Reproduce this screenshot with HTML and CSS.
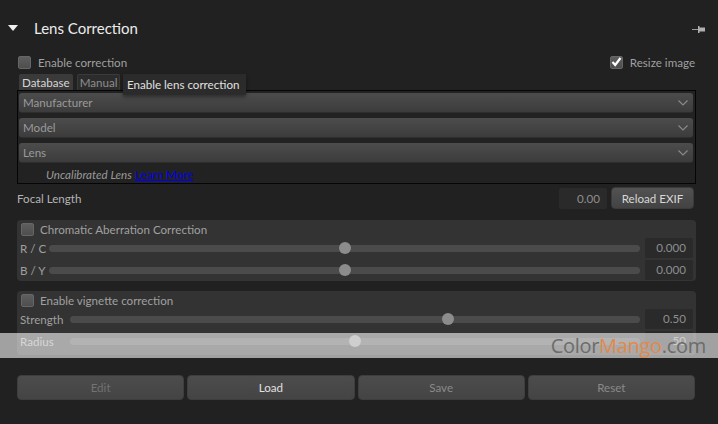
FILE: index.html
```html
<!DOCTYPE html>
<html>
<head>
<meta charset="utf-8">
<link rel="stylesheet" href="styles.css">
</head>
<body>
<div class="app">
  <div class="header">
    <svg class="tri" width="10" height="7" viewBox="0 0 10 7"><polygon points="0,0 10,0 5,6" fill="#f0f0f0"/></svg>
    <span class="title">Lens Correction</span>
    <svg class="pin" width="14" height="7" viewBox="0 0 14 7"><rect x="0" y="3" width="7" height="1" fill="#9a9a9a"/><rect x="6" y="0" width="1.5" height="7" fill="#b0b0b0"/><rect x="7" y="1.5" width="6" height="4" fill="#b0b0b0"/></svg>
  </div>
  <div class="panel">
    <div class="toprow">
      <label class="chk"><span class="box"></span><span>Enable correction</span></label>
      <label class="chk"><span class="box checked"><svg width="11" height="10" viewBox="0 0 11 10"><polyline points="1.5,5 4.2,8 9.5,1" fill="none" stroke="#ffffff" stroke-width="2.2"/></svg></span><span>Resize image</span></label>
    </div>
    <div class="tabs">
      <span class="tab active">Database</span>
      <span class="tab">Manual</span>
    </div>
    <div class="dbbox">
      <div class="combo"><span>Manufacturer</span><svg width="10" height="6" viewBox="0 0 10 6"><polyline points="0.5,0.5 5,5 9.5,0.5" fill="none" stroke="#8a8a8a" stroke-width="1.2"/></svg></div>
      <div class="combo"><span>Model</span><svg width="10" height="6" viewBox="0 0 10 6"><polyline points="0.5,0.5 5,5 9.5,0.5" fill="none" stroke="#8a8a8a" stroke-width="1.2"/></svg></div>
      <div class="combo"><span>Lens</span><svg width="10" height="6" viewBox="0 0 10 6"><polyline points="0.5,0.5 5,5 9.5,0.5" fill="none" stroke="#8a8a8a" stroke-width="1.2"/></svg></div>
      <div class="uncal"><em>Uncalibrated Lens</em> <a href="#">Learn More</a></div>
    </div>
    <div class="focal">
      <span class="flabel">Focal Length</span>
      <span class="num fnum">0.00</span>
      <span class="btn reload">Reload EXIF</span>
    </div>
    <div class="group g1">
      <label class="chk"><span class="box"></span><span>Chromatic Aberration Correction</span></label>
      <div class="srow"><span class="slabel">R / C</span><div class="track"><span class="thumb" style="left:50%"></span></div><span class="num">0.000</span></div>
      <div class="srow"><span class="slabel">B / Y</span><div class="track"><span class="thumb" style="left:50%"></span></div><span class="num">0.000</span></div>
    </div>
    <div class="group g2">
      <label class="chk"><span class="box"></span><span>Enable vignette correction</span></label>
      <div class="srow"><span class="slabel">Strength</span><div class="track"><span class="thumb" style="left:66.3%"></span></div><span class="num">0.50</span></div>
      <div class="srow"><span class="slabel">Radius</span><div class="track"><span class="thumb" style="left:50%"></span></div><span class="num">50</span></div>
    </div>
    <div class="buttons">
      <span class="btn dis">Edit</span>
      <span class="btn on">Load</span>
      <span class="btn mid">Save</span>
      <span class="btn mid">Reset</span>
    </div>
  </div>
  <div class="tooltip">Enable lens correction</div>
  <div class="watermark"><span class="wm"><span class="c">Color</span><span class="m">Mango</span><span class="c">.com</span></span></div>
</div>
</body>
</html>
```
FILE: styles.css
```css
* { box-sizing: border-box; }
html, body { margin: 0; padding: 0; background: #212121; }
body {
  width: 718px; height: 424px; overflow: hidden;
  font-family: "Lato", "Open Sans", sans-serif;
  font-size: 11.6px; color: #a0a0a0;
}
.app { position: relative; width: 718px; height: 424px; display: flow-root; }
.header {
  display: flex; align-items: center;
  height: 20px; margin-top: 18px; padding-left: 8px; padding-right: 12px;
}
.tri { margin-top: 1px; }
.title { margin-left: 16px; font-size: 15px; color: #ececec; flex: 1; }
.pin { margin-top: 2px; }
.panel { padding: 0 22px 0 17px; }
.toprow {
  display: flex; justify-content: space-between; align-items: center;
  margin-top: 17px; height: 14px; padding-left: 1px;
}
.chk { display: flex; align-items: center; gap: 7px; color: #a0a0a0; }
.box {
  width: 13px; height: 13px; border-radius: 2px;
  background: linear-gradient(#5e5e5e, #4e4e4e);
  border: 1px solid #666;
  display: flex; align-items: center; justify-content: center;
}
.toprow .chk:last-child { padding-right: 1px; }
.tabs { display: flex; gap: 4px; margin-top: 5px; height: 16px; padding-left: 2px; }
.tab {
  padding: 0 2px; height: 16px; line-height: 15px;
  background: #2c2c2c; color: #8e8e8e;
  border: 1px solid #3a3a3a; border-bottom: none;
  border-radius: 2px 2px 0 0;
}
.tab.active { background: #3a3a3a; color: #d6d6d6; border-color: #3a3a3a; }
.dbbox {
  border: 1px solid #050505; background: #222;
  padding: 2px 2px 0 1px;
  display: flex; flex-direction: column; gap: 5px;
  height: 94px;
}
.combo {
  height: 20px; border-radius: 3px;
  background: linear-gradient(#4c4c4c, #3c3c3c);
  border-bottom: 1px solid #2e2e2e;
  display: flex; align-items: center; justify-content: space-between;
  padding: 0 5px 0 4px; color: #9a9a9a;
}
.uncal { padding-left: 27px; color: #9a9a9a; font-size: 11.6px; height: 16px; line-height: 16px; margin-top: -1px; }
.uncal a { color: #0000ee; }
.focal { display: flex; align-items: center; margin-top: 3px; height: 22px; }
.flabel { flex: 1; color: #b4b4b4; }
.num {
  width: 48px; height: 20px; line-height: 20px;
  background: #2a2a2a; border-radius: 2px;
  text-align: right; padding-right: 7px; color: #8e8e8e;
}
.fnum { height: 21px; line-height: 21px; }
.btn {
  display: flex; align-items: center; justify-content: center;
  border-radius: 4px; background: linear-gradient(#525252, #434343);
  border: 1px solid #3b3b3b; color: #d8d8d8;
}
.reload { width: 83px; height: 22px; margin-left: 4px; margin-right: 2px; }
.group {
  background: #333; border-radius: 4px;
  padding: 1px 3px 1px 3px;
  display: flex; flex-direction: column;
}
.g1 { margin-top: 11px; height: 61px; }
.g2 { margin-top: 10px; height: 64px; }
.group .chk { height: 16px; padding-left: 1px; gap: 6px; margin-bottom: 1px; }
.srow { display: flex; align-items: center; height: 20px; gap: 5px; }
.srow + .srow { margin-top: 2px; }
.slabel { color: #a0a0a0; width: 24px; flex: none; white-space: nowrap; }
.g2 .slabel { width: 45px; }
.track {
  flex: 1; height: 7px; border-radius: 4px; background: #4b4b4b; position: relative;
}
.thumb {
  position: absolute; top: 50%; width: 12px; height: 12px; margin: -6px 0 0 -6px;
  border-radius: 50%; background: #8c8c8c;
}
.buttons {
  display: grid; grid-template-columns: repeat(4, 1fr); gap: 3px;
  margin-top: 20px; height: 25px; padding-right: 1px;
}
.buttons .btn { background: linear-gradient(#4c4c4c, #444); border-color: #3e3e3e; }
.dis { color: #727272; }
.on { color: #e0e0e0; }
.mid { color: #8a8a8a; }
.tooltip {
  position: absolute; left: 123px; top: 74px; width: 123px; height: 21px;
  background: #2b2b2b; color: #e0e0e0;
  line-height: 21px; padding-left: 4px;
  box-shadow: 0 2px 4px rgba(0,0,0,0.4);
}
.watermark {
  position: absolute; left: 0; top: 333px; width: 718px; height: 25px;
  background: rgba(255,255,255,0.58);
  display: flex; justify-content: flex-end; align-items: center;
  padding-right: 12px;
}
.wm { font-family: "Open Sans", sans-serif; font-size: 20px; letter-spacing: -0.3px; }
.wm .c { color: #6c6c6c; }
.wm .m { color: #e2894c; }
```
